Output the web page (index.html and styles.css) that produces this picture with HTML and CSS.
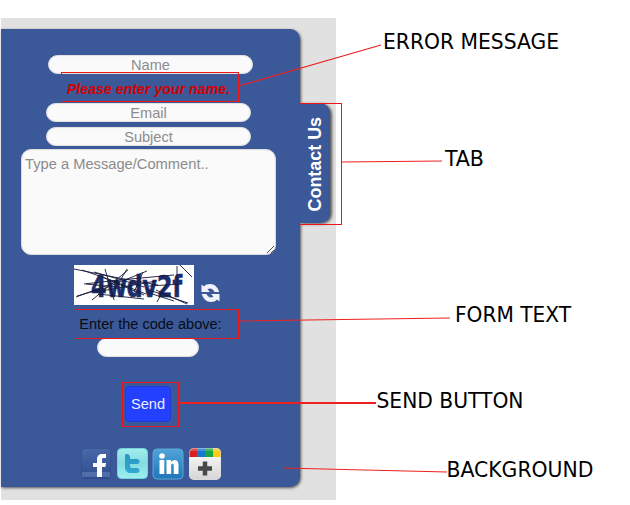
FILE: index.html
```html
<!DOCTYPE html>
<html lang="en">
<head>
<meta charset="utf-8">
<title>Contact form guide</title>
<link rel="stylesheet" href="styles.css">
</head>
<body>
<main class="guide">
  <div class="stage">
    <form class="panel">
      <input class="field name" placeholder="Name" aria-label="Name">
      <p class="error">Please enter your name.</p>
      <input class="field" placeholder="Email" aria-label="Email">
      <input class="field subject" placeholder="Subject" aria-label="Subject">
      <div class="message-wrap">
        <textarea class="message" placeholder="Type a Message/Comment.." aria-label="Message"></textarea>
        <svg class="grip" width="9" height="9" viewBox="0 0 9 9"><path d="M1 8 8 1M5 8 8 5"/></svg>
      </div>
      <div class="captcha">
        <svg class="challenge" width="120" height="40" viewBox="0 0 120 40">
          <rect width="120" height="40" fill="#fff"/>
          <text class="code" x="17" y="31.5" textLength="91" lengthAdjust="spacingAndGlyphs">4wdv2f</text>
          <path class="scratch" d="M0 4 45 13 84 20M8 5 34 14 72 29M20 7l28 8 22 7M3 31l28-8 42-17M10 19l35-4 55-5M2 32l43-16M18 35l36-30M31 4l9 31M24 29l46 5M53 4 41 24M28 12l42 18M69 7l-9 20M82 25l31 14M72 24l42 14M72 27l28 9M75 21l33-2M92 20l-9 17M103 1v25M106 0l12 12M12 19l30 3M22 27l60-11"/>
        </svg>
        <svg class="refresh" width="19" height="20" viewBox="0 0 19 20">
          <path d="M.5 1.500V9H9L6.500 6.500C9 4.500 12 5.500 13.500 9h4.700C17 4.500 13.500 1 9 1 6.500 1 4.700 1.700 3 3.500zM18.500 18.500V11H10l2.500 2.500C10 15.500 7 14.500 5.500 11H.8C2 15.500 5.500 19 10 19c2.500 0 4.300-.7 6-2.500z"/>
        </svg>
      </div>
      <label class="prompt" for="code">Enter the code above:</label>
      <input class="field short" id="code">
      <button class="send" type="button">Send</button>
      <div class="social">
        <svg width="31" height="31" viewBox="0 0 31 31">
          <defs>
            <linearGradient id="fb" x2="0" y2="1"><stop stop-color="#4868a7"/><stop offset="1" stop-color="#2d4d90"/></linearGradient>
            <linearGradient id="tw" x2="0" y2="1"><stop stop-color="#a5edec"/><stop offset=".5" stop-color="#82dce2"/><stop offset="1" stop-color="#9ff0ed"/></linearGradient>
            <linearGradient id="bird" x2="0" y2="1"><stop stop-color="#2797c4"/><stop offset="1" stop-color="#33a8d0"/></linearGradient>
            <linearGradient id="li" x2="0" y2="1"><stop stop-color="#51a4d8"/><stop offset="1" stop-color="#1e76b9"/></linearGradient>
            <linearGradient id="gp" x2="0" y2="1"><stop stop-color="#fff"/><stop offset="1" stop-color="#d5d5d5"/></linearGradient>
            <clipPath id="tile"><rect width="32" height="32" rx="5"/></clipPath>
          </defs>
          <rect x=".5" y=".5" width="29" height="30" rx="3" fill="url(#fb)" stroke="#294781" stroke-opacity=".4"/>
          <rect x="1" y="24" width="28" height="5" fill="#7893c7" opacity=".45"/>
          <path fill="#fff" d="M25 6v4h-2.500c-1 0-1.500.5-1.500 1.500V15h4l-.6 4H21v10h-5V19h-4v-4h4v-3.500C16 8 18 6 21.500 6z"/>
        </svg>
        <svg width="31" height="31" viewBox="0 0 31 31">
          <rect x=".5" y=".5" width="30" height="30" rx="4" fill="url(#tw)" stroke="#73d3da"/>
          <path fill="url(#bird)" d="M9 6c1.600 0 4 .5 4 3v2h7c1.500 0 2.500 1 2.500 2.500S21.500 16 20 16h-7v2c0 1.500.8 2 2.500 2H20c1.600 0 2.500 1 2.500 2.500S21.500 25 20 25h-6c-3.700 0-6-2-6-5.500V8c0-1 .2-2 1-2z"/>
        </svg>
        <svg width="32" height="32" viewBox="0 0 32 32">
          <rect x="1" y="1" width="30" height="30" rx="4" fill="url(#li)" stroke="#5aa9d9"/>
          <circle cx="10" cy="8" r="2.800" fill="#fff"/>
          <path fill="#fff" d="M7.500 12h4.800v14H7.500zM14.500 12H19v2c3-3.500 7.500-2.500 7.500 3v9h-4.800v-8c0-3.500-2.500-2.800-2.500-.5V26h-4.700z"/>
        </svg>
        <svg width="32" height="32" viewBox="0 0 32 32">
          <g clip-path="url(#tile)">
            <rect width="32" height="32" fill="url(#gp)"/>
            <path fill="#d91f22" d="M0 0h8v9H0z"/><path fill="#1778d2" d="M8 0h8v9H8z"/><path fill="#18a643" d="M16 0h8v9h-8z"/><path fill="#fbc918" d="M24 0h8v9h-8z"/>
            <path fill="#fff" opacity=".2" d="M0 0h32v3H0z"/>
          </g>
          <rect x=".5" y=".5" width="31" height="31" rx="4.500" fill="none" stroke="#ddd" stroke-opacity=".45"/>
          <path stroke="#484848" stroke-width="4.500" d="M16 13.500v14M9 20.500h14"/>
        </svg>
      </div>
    </form>
    <div class="tab"><span class="tab-label">Contact Us</span></div>
  </div>
  <svg class="notes" width="630" height="505" viewBox="0 0 630 505">
    <g class="box" shape-rendering="crispEdges">
      <rect x="61.500" y="72.500" width="177" height="29"/>
      <rect x="299.500" y="103.500" width="42" height="121"/>
      <rect x="75.500" y="309.500" width="163" height="29"/>
      <rect x="122.500" y="382.500" width="56" height="44"/>
    </g>
    <g class="leader">
      <path d="M239 86 381 45M342 162l100-1M239 321l211-3M283 468l164 4"/>
      <path class="strong" d="M179 403h197"/>
    </g>
    <g class="label">
      <text x="383" y="49" textLength="176" lengthAdjust="spacingAndGlyphs">ERROR MESSAGE</text>
      <text x="445" y="166" textLength="39" lengthAdjust="spacingAndGlyphs">TAB</text>
      <text x="455" y="322" textLength="116" lengthAdjust="spacingAndGlyphs">FORM TEXT</text>
      <text x="376.500" y="408" textLength="147" lengthAdjust="spacingAndGlyphs">SEND BUTTON</text>
      <text x="446.500" y="477" textLength="147" lengthAdjust="spacingAndGlyphs">BACKGROUND</text>
    </g>
  </svg>
</main>
</body>
</html>
```

FILE: styles.css
```css
* { box-sizing: border-box; }
body { margin: 0; background: #fff; font-family: "Liberation Sans", Arial, sans-serif; }
.guide { position: relative; width: 630px; height: 505px; padding: 18px 0 0 1px; overflow: hidden; }
.stage { display: flex; align-items: flex-start; width: 335px; height: 482px; padding-top: 11px; background: #e1e1e1; }
.panel {
  display: flex; flex-direction: column; align-items: center;
  width: 299px; height: 458px; padding: 26px 4px 0 0;
  background: #3b5998; border-radius: 0 10px 10px 0;
  box-shadow: 1px 1px 3px #555;
}
.field {
  flex: none; width: 205px; height: 19px; padding: 0 6px; border: 1px solid #e2e2e2; border-radius: 10px;
  background: #fafafa; box-shadow: inset 0 0 1px #ddd;
  font: 14.6px "Liberation Sans", Arial, sans-serif; text-align: center; outline: none;
}
.field::placeholder, .message::placeholder { color: #8c8c8c; opacity: 1; }
.name { margin-left: 4px; }
.error { margin: 0; height: 29px; font: italic bold 14.2px/30px "Liberation Sans", Arial, sans-serif; color: #d40000; white-space: nowrap; }
.subject { margin-top: 5px; }
.message-wrap { position: relative; flex: none; width: 255px; height: 106px; margin-top: 3px; }
.message {
  display: block; width: 100%; height: 100%; padding: 6px 3px; resize: none; outline: none;
  border: 1px solid #dcdcdc; border-radius: 10px; background: #fafafa; box-shadow: inset 0 0 1px #ddd;
  font: 14.7px "Liberation Sans", Arial, sans-serif;
}
.grip { position: absolute; right: 1px; bottom: 1px; fill: none; stroke: #555; }
.captcha { display: flex; align-items: flex-end; gap: 7px; height: 40px; margin: 10px 4px 0 0; }
.challenge { overflow: visible; }
.code { font: bold 31px "DejaVu Sans Condensed", "DejaVu Sans", sans-serif; fill: #1b2e6b; stroke: #1b2e6b; stroke-width: .7; }
.scratch { fill: none; stroke: #15193b; stroke-width: .9; }
.refresh { margin-bottom: 2px; fill: #f0f3fa; }
.captcha svg { flex: none; }
.prompt { height: 33px; margin-left: 4px; font-size: 14.55px; line-height: 38px; color: #080b14; }
.short { width: 102px; margin-right: 2px; }
.send {
  flex: none; width: 46px; height: 36px; margin: 29px 2px 0 0; padding: 0 0 0 1px; border: 1px solid #2439d4; border-radius: 4px;
  background: #2440ff; color: #eef; font: 14.6px "Liberation Sans", Arial, sans-serif;
}
.social { display: flex; gap: 4.5px; margin: 26px 0 0 4.5px; }
.tab {
  display: flex; align-items: center; justify-content: center; width: 30px; height: 120px; margin-top: 74px;
  background: #3b5998; border-radius: 0 10px 10px 0; box-shadow: 2px 1px 3px #555; clip-path: inset(-5px -8px -5px 0);
}
.tab-label { padding-bottom: 2px; writing-mode: vertical-rl; transform: rotate(180deg); color: #fff; font-size: 17.9px; font-weight: bold; white-space: nowrap; }
.notes { position: absolute; inset: 0; pointer-events: none; }
.box { fill: none; stroke: #ed1515; }
.leader { fill: none; stroke: #f02020; stroke-width: 1.1; }
.strong { stroke-width: 2; }
.label { font: 20.8px "DejaVu Sans Condensed", "DejaVu Sans", sans-serif; fill: #000; }
```
